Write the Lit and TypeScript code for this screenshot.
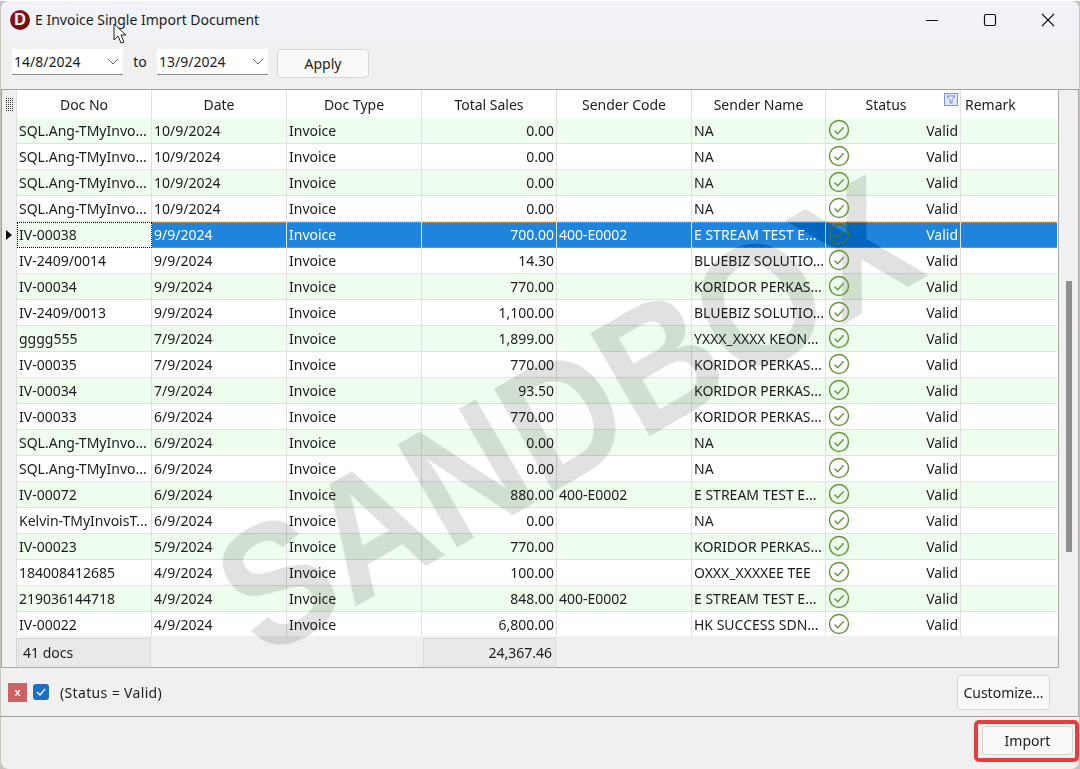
import { LitElement, css, html, svg } from 'lit';
import { customElement } from 'lit/decorators.js';

interface Doc {
    no: string;
    date: string;
    total: string;
    code?: string;
    name: string;
}

const ANG = 'SQL.Ang-TMyInvo...';
const KOR = 'KORIDOR PERKAS...';
const BLUE = 'BLUEBIZ SOLUTIO...';
const ESTR = 'E STREAM TEST E...';

const DOCS: Doc[] = [
    { no: ANG, date: '10/9/2024', total: '0.00', name: 'NA' },
    { no: ANG, date: '10/9/2024', total: '0.00', name: 'NA' },
    { no: ANG, date: '10/9/2024', total: '0.00', name: 'NA' },
    { no: ANG, date: '10/9/2024', total: '0.00', name: 'NA' },
    { no: 'IV-00038', date: '9/9/2024', total: '700.00', code: '400-E0002', name: ESTR },
    { no: 'IV-2409/0014', date: '9/9/2024', total: '14.30', name: BLUE },
    { no: 'IV-00034', date: '9/9/2024', total: '770.00', name: KOR },
    { no: 'IV-2409/0013', date: '9/9/2024', total: '1,100.00', name: BLUE },
    { no: 'gggg555', date: '7/9/2024', total: '1,899.00', name: 'YXXX_XXXX KEON...' },
    { no: 'IV-00035', date: '7/9/2024', total: '770.00', name: KOR },
    { no: 'IV-00034', date: '7/9/2024', total: '93.50', name: KOR },
    { no: 'IV-00033', date: '6/9/2024', total: '770.00', name: KOR },
    { no: ANG, date: '6/9/2024', total: '0.00', name: 'NA' },
    { no: ANG, date: '6/9/2024', total: '0.00', name: 'NA' },
    { no: 'IV-00072', date: '6/9/2024', total: '880.00', code: '400-E0002', name: ESTR },
    { no: 'Kelvin-TMyInvoisT...', date: '6/9/2024', total: '0.00', name: 'NA' },
    { no: 'IV-00023', date: '5/9/2024', total: '770.00', name: KOR },
    { no: '184008412685', date: '4/9/2024', total: '100.00', name: 'OXXX_XXXXEE TEE' },
    { no: '219036144718', date: '4/9/2024', total: '848.00', code: '400-E0002', name: ESTR },
    { no: 'IV-00022', date: '4/9/2024', total: '6,800.00', name: 'HK SUCCESS SDN...' },
];

const SELECTED = 4;

const chevron = svg`<svg class="chev" width="12" height="7" viewBox="0 0 12 7"><path d="M1 1l5 5 5-5" fill="none" stroke="#6a6a6a" stroke-width="1"/></svg>`;

const validIcon = svg`<svg class="valid" width="22" height="22" viewBox="0 0 22 22"><circle cx="11" cy="11" r="9.5" fill="none" stroke="#64943a" stroke-width="1.4"/><path d="M6.5 11.5l3.2 3.2 6-6.4" fill="none" stroke="#64943a" stroke-width="1.3"/></svg>`;

@customElement('app-root')
export class AppRoot extends LitElement {
    static styles = css`
        :host {
            display: block;
            width: 1080px;
            height: 769px;
            background: #c9c4bd;
            font-family: 'Noto Sans', sans-serif;
            font-size: 14px;
            color: #1c1c1c;
        }

        .window {
            position: relative;
            isolation: isolate;
            display: flex;
            flex-direction: column;
            height: 768px;
            margin-left: 1px;
            margin-right: 1px;
            margin-top: 1px;
            border-radius: 8px;
            overflow: hidden;
            background: #f0f0f0;
        }

        .titlebar {
            display: flex;
            align-items: center;
            height: 37px;
            flex: none;
            padding-left: 9px;
            background: #f1f3f9;
        }

        .logo {
            width: 20px;
            height: 20px;
            border-radius: 50%;
            background: radial-gradient(circle at 40% 40%, #a8181c, #55060a);
            color: #fff;
            font-family: 'Liberation Sans', sans-serif;
            font-size: 16px;
            font-weight: 700;
            line-height: 20px;
            text-align: center;
        }

        .title {
            margin-left: 5px;
            flex: 1;
        }

        .winbtn {
            display: flex;
            justify-content: center;
            width: 58px;
        }

        .winbtn.close {
            margin-right: 2px;
        }

        .cursor {
            position: absolute;
            left: 112px;
            top: 22px;
        }

        .toolbar {
            display: flex;
            align-items: flex-start;
            height: 51px;
            flex: none;
            padding: 11px 0 0 11px;
            box-sizing: border-box;
        }

        .date {
            display: flex;
            align-items: center;
            justify-content: space-between;
            box-sizing: border-box;
            width: 111px;
            height: 26px;
            padding: 0 4px 0 2px;
            background: #fff;
            border-bottom: 1px solid #8c8c8c;
        }

        .to {
            width: 34px;
            line-height: 25px;
            text-align: center;
        }

        .btn {
            box-sizing: border-box;
            border: 1px solid #d4d4d4;
            border-radius: 4px;
            background: #f9f9f9;
            text-align: center;
        }

        .apply {
            width: 92px;
            height: 29px;
            margin-left: 9px;
            line-height: 27px;
        }

        .main {
            display: flex;
            flex: none;
            border-top: 1px solid #a0a0a4;
            border-right: 1px solid #a8a8a8;
        }

        .grid {
            width: 1056px;
            flex: none;
            border-right: 1px solid #a8a8a8;
            border-left: 1px solid #a0a0a4;
            border-bottom: 1px solid #a8a8a8;
        }

        .row {
            display: grid;
            grid-template-columns: 15px 135px 135px 135px 135px 135px 134px 135px 96px;
            height: 26px;
            background: #fff;
        }

        .row.last {
            height: 24px;
        }

        .row.last .cell {
            border-bottom: none;
        }

        .cell {
            display: flex;
            align-items: center;
            box-sizing: border-box;
            min-width: 0;
            padding: 0 2px;
            border-right: 1px solid #e0e0e0;
            border-bottom: 1px solid #e0e0e0;
            white-space: nowrap;
            overflow: hidden;
        }

        .cell:last-child {
            border-right: none;
        }

        .txt {
            position: relative;
            z-index: 2;
        }

        .right {
            justify-content: flex-end;
        }

        .status {
            justify-content: space-between;
            overflow: visible;
        }

        .valid {
            position: relative;
            z-index: 2;
            margin-bottom: 1px;
            flex: none;
        }

        .row.alt .cell:not(.ind) {
            background: #eefdee;
        }

        .ind {
            padding: 0;
            justify-content: center;
            background: #f0f0f0;
            border-bottom: none;
        }

        .row.sel .cell:not(.ind):not(.focus) {
            padding-bottom: 1px;
            background: #1e84dc;
            color: #fff;
            border-right-color: #d9e6f0;
            border-top: 1px dotted #e2a05c;
            border-bottom: 1px dotted #e2a05c;
        }

        .row.sel .cell:last-child {
            border-right: none;
        }

        .row.sel .valid {
            filter: brightness(0.75);
        }

        .cell.focus {
            border: 1px dotted #111;
            padding: 0 1px 1px;
        }

        .head {
            height: 28px;
        }

        .head .cell {
            position: relative;
            justify-content: center;
            background: #fff;
            border-bottom: none;
        }

        .head .ind {
            background: #f0f0f0;
        }

        .head .left {
            justify-content: flex-start;
            padding-left: 4px;
        }

        .head .st {
            padding-right: 16px;
        }

        .filter {
            position: absolute;
            right: 2px;
            top: 3px;
        }

        .foot {
            display: grid;
            grid-template-columns: 15px 135px 135px 135px 135px 135px 134px 135px 96px;
            height: 31px;
            padding-top: 2px;
            box-sizing: border-box;
            background: #f0f0f0;
        }

        .foot .ind {
            border-right: 1px solid #d0d0d0;
        }

        .sum {
            display: flex;
            align-items: center;
            box-sizing: border-box;
            height: 28px;
            margin-right: 1px;
            margin-left: 1px;
            padding: 0 3px;
            background: #e9eaea;
            border: 1px solid #dadada;
        }

        .sum.first {
            padding-left: 4px;
        }

        .sum.right {
            justify-content: flex-end;
        }

        .scroll {
            flex: 1;
            padding: 191px 0 0 7px;
        }

        .thumb {
            width: 6px;
            height: 271px;
            background: #8f8f8f;
        }

        .filterbar {
            display: flex;
            align-items: center;
            flex: none;
            height: 48px;
            padding-left: 7px;
            border-bottom: 1px solid #9c9c9c;
            border-right: 1px solid #a8a8a8;
        }

        .clear {
            width: 19px;
            height: 19px;
            background: #cc6464;
            color: #fff;
            font-family: 'Liberation Sans', sans-serif;
            font-size: 11px;
            font-weight: 700;
            line-height: 18px;
            text-align: center;
        }

        .check {
            display: flex;
            align-items: center;
            justify-content: center;
            width: 16px;
            height: 16px;
            margin-left: 6px;
            border-radius: 3px;
            background: #1e6ec2;
        }

        .expr {
            flex: 1;
            margin-left: 11px;
            letter-spacing: 0.35px;
        }

        .customize {
            width: 93px;
            height: 35px;
            margin-right: 28px;
            line-height: 33px;
        }

        .bottom {
            display: flex;
            justify-content: flex-end;
            flex: 1;
            padding: 3px 0 0;
        }

        .mark {
            box-sizing: border-box;
            width: 105px;
            height: 42px;
            padding: 2px 2px 3px 4px;
            border: 4px solid #ea3b3f;
            border-radius: 5px;
        }

        .import {
            height: 29px;
            line-height: 27px;
        }

        .watermark {
            position: absolute;
            left: 275px;
            top: 509px;
            z-index: 1;
            font-family: 'Liberation Sans', sans-serif;
            font-size: 172px;
            font-weight: 700;
            line-height: 1;
            color: #1e1e1e;
            mix-blend-mode: difference;
            transform-origin: 0 100%;
            transform: rotate(-30deg) scaleX(0.895);
            pointer-events: none;
            white-space: nowrap;
        }
    `;

    renderRow(d: Doc, i: number) {
        const sel = i === SELECTED;
        const cls = `row${i % 2 === 0 ? ' alt' : ''}${sel ? ' sel' : ''}${i === DOCS.length - 1 ? ' last' : ''}`;
        return html`<div class=${cls}>
            <div class="cell ind">
                ${sel ? svg`<svg width="6" height="10" viewBox="0 0 6 10"><path d="M0 0l6 5-6 5z" fill="#111"/></svg>` : ''}
            </div>
            <div class="cell ${sel ? 'focus' : ''}"><span class="txt">${d.no}</span></div>
            <div class="cell"><span class="txt">${d.date}</span></div>
            <div class="cell"><span class="txt">Invoice</span></div>
            <div class="cell right"><span class="txt">${d.total}</span></div>
            <div class="cell"><span class="txt">${d.code ?? ''}</span></div>
            <div class="cell"><span class="txt">${d.name}</span></div>
            <div class="cell status">${validIcon}<span class="txt">Valid</span></div>
            <div class="cell"></div>
        </div>`;
    }

    render() {
        return html`<div class="window">
            <div class="titlebar">
                <div class="logo">D</div>
                <div class="title">E Invoice Single Import Document</div>
                <div class="winbtn">
                    <svg width="14" height="14" viewBox="0 0 14 14"><path d="M1 7.5h12" stroke="#111" stroke-width="1"/></svg>
                </div>
                <div class="winbtn">
                    <svg width="14" height="14" viewBox="0 0 14 14"><rect x="1.5" y="1.5" width="11" height="11" rx="1.5" fill="none" stroke="#111" stroke-width="1.2"/></svg>
                </div>
                <div class="winbtn close">
                    <svg width="14" height="14" viewBox="0 0 14 14"><path d="M1 1l12 12M13 1L1 13" stroke="#111" stroke-width="1.1"/></svg>
                </div>
            </div>
            <svg class="cursor" width="14" height="22" viewBox="0 0 14 22"><path d="M1 1v16l4-4 3 7 3-1-3-7h5z" fill="#fff" stroke="#222" stroke-width="1"/></svg>
            <div class="toolbar">
                <div class="date">14/8/2024${chevron}</div>
                <div class="to">to</div>
                <div class="date">13/9/2024${chevron}</div>
                <div class="btn apply">Apply</div>
            </div>
            <div class="main">
                <div class="grid">
                    <div class="row head">
                        <div class="cell ind">
                            <svg width="7" height="14" viewBox="0 0 7 14">
                                <path d="M0 1.5h1M0 3.5h1M0 5.5h1M0 7.5h1M0 9.5h1M0 11.5h1M0 13.5h1" stroke="#222" stroke-width="1"/>
                                <path d="M2 1.5h5M2 3.5h5M2 5.5h5M2 7.5h5M2 9.5h5M2 11.5h5M2 13.5h5" stroke="#333" stroke-width="1" stroke-dasharray="1 1"/>
                            </svg>
                        </div>
                        <div class="cell">Doc No</div>
                        <div class="cell">Date</div>
                        <div class="cell">Doc Type</div>
                        <div class="cell">Total Sales</div>
                        <div class="cell">Sender Code</div>
                        <div class="cell">Sender Name</div>
                        <div class="cell st">
                            Status
                            <svg class="filter" width="14" height="13" viewBox="0 0 14 13">
                                <rect x=".5" y=".5" width="13" height="12" fill="#e2e8ff" stroke="#7f90f5"/>
                                <path d="M3 3h8L8 6.5V10H6V6.5z" fill="#fff" stroke="#6c7ff0" stroke-width="1"/>
                            </svg>
                        </div>
                        <div class="cell left">Remark</div>
                    </div>
                    ${DOCS.map((d, i) => this.renderRow(d, i))}
                    <div class="foot">
                        <div class="cell ind"></div>
                        <div class="sum first">41 docs</div>
                        <div></div>
                        <div></div>
                        <div class="sum right">24,367.46</div>
                    </div>
                </div>
                <div class="scroll"><div class="thumb"></div></div>
            </div>
            <div class="filterbar">
                <div class="clear">x</div>
                <div class="check">
                    <svg width="10" height="8" viewBox="0 0 10 8"><path d="M1 4l3 3 5-6" fill="none" stroke="#fff" stroke-width="1.2"/></svg>
                </div>
                <div class="expr">(Status = Valid)</div>
                <div class="btn customize">Customize...</div>
            </div>
            <div class="bottom">
                <div class="mark"><div class="btn import">Import</div></div>
            </div>
            <div class="watermark">SANDBOX</div>
        </div>`;
    }
}
